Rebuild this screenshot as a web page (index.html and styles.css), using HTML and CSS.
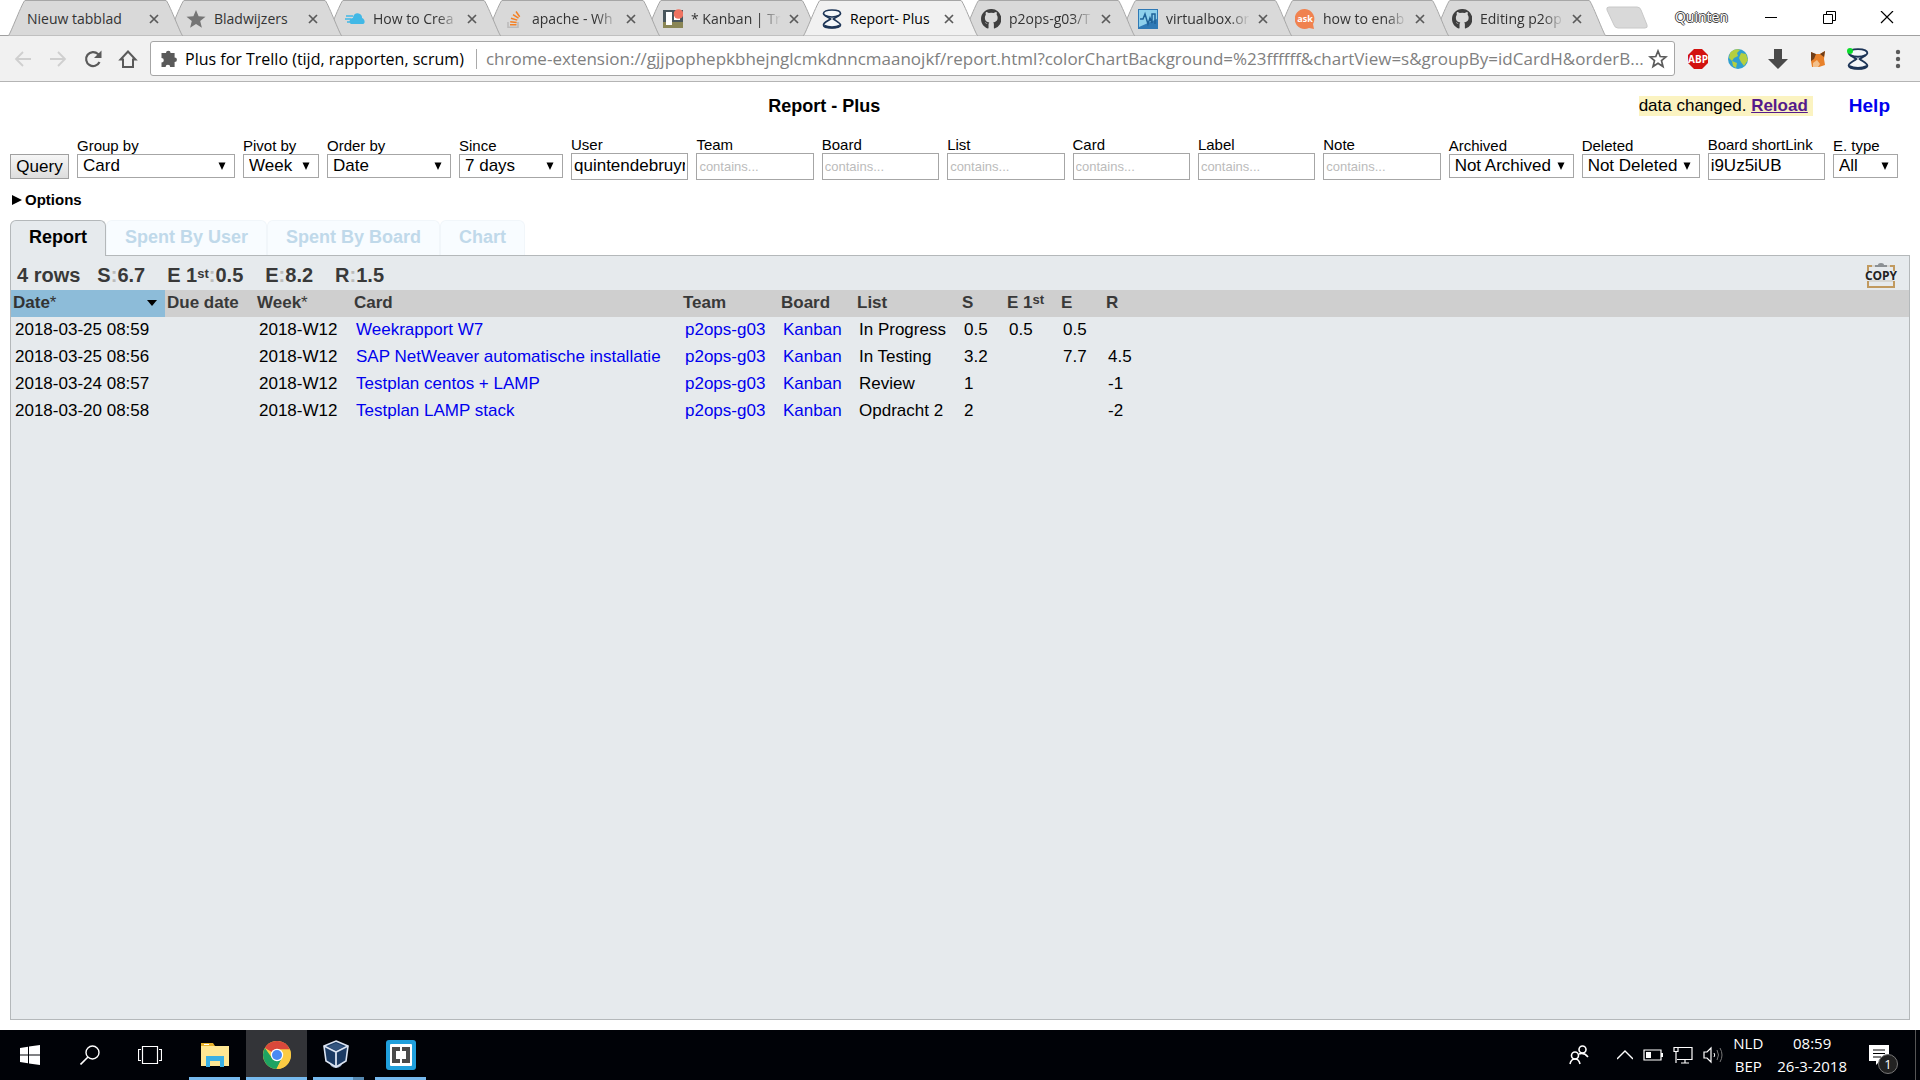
FILE: index.html
```html
<!DOCTYPE html>
<html lang="nl">
<head>
<meta charset="utf-8">
<title>Report- Plus</title>
<link rel="stylesheet" href="styles.css">
</head>
<body>
<svg class="defs" aria-hidden="true">
  <symbol id="shape" viewBox="0 0 175 36" preserveAspectRatio="none"><path d="M0 36 0.500 35.500C2 35 15 .5 17 .5H158C160 .5 173 35 174.500 35.500L175 36Z"/></symbol>
  <symbol id="close" viewBox="0 0 10 10"><path d="M1 1 9 9M9 1 1 9" stroke="#5a5a5a" stroke-width="1.700" fill="none"/></symbol>
  <symbol id="github" viewBox="0 0 16 16"><path fill="#3f3f3f" d="M8 0C3.580 0 0 3.580 0 8c0 3.540 2.290 6.530 5.470 7.590.4.070.55-.17.55-.38v-3.200C4 12.300 3.500 11 3.200 10.600c1.300.2 1.500 1.600 2.900 1.300.1-.6.3-1 .6-1.200C4.500 10.300 3.100 9.500 3.100 6.700c0-.9.3-1.600.8-2.200-.1-.2-.4-1 .1-2.100 0 0 .7-.2 2.200.8a7.700 7.700 0 0 1 4 0c1.500-1 2.200-.8 2.200-.8.4 1.100.2 1.900.1 2.100.5.6.8 1.300.8 2.200 0 2.800-1.500 3.600-3.600 3.900.3.300.6.8.6 1.600v3c0 .2.100.5.5.4A8 8 0 0 0 8 0z"/></symbol>
  <symbol id="plus" viewBox="0 0 20 20"><g fill="#f4f7fa" stroke="#1d3557" stroke-width="1.700"><path d="M10 1C5 1 1.500 2.500 1.500 4.500S6 8 8.500 10C6 12 1.500 13.500 1.500 16S5 19 10 19s8.500-1 8.500-3S14 12 11.500 10C14 8 18.500 6.500 18.500 4.500S15 1 10 1Z"/><path d="M3 6.500Q10 9.500 17 6.500" fill="none"/></g><path fill="#1d3557" d="M2 15.500Q10 19 18 15.500 18 19.500 10 19.500T2 15.500z"/></symbol>
</svg>

<header class="browser">
  <div class="tabstrip">
    <nav class="tabs" aria-label="Tabbladen">
      <div class="tab"><svg class="shape"><use href="#shape"/></svg><span class="name">Nieuw tabblad</span><button class="close" aria-label="Sluiten"><svg><use href="#close"/></svg></button></div>
      <div class="tab"><svg class="shape"><use href="#shape"/></svg><svg class="fav" viewBox="0 0 20 20"><path fill="#757575" d="m10 1 2.600 6.200 6.900.5-5.300 4.400 1.700 6.600L10 15.100 4.100 18.700l1.700-6.600L.5 7.700l6.900-.5z"/></svg><span class="name">Bladwijzers</span><button class="close" aria-label="Sluiten"><svg><use href="#close"/></svg></button></div>
      <div class="tab"><svg class="shape"><use href="#shape"/></svg><svg class="fav" viewBox="0 0 20 20"><path fill="#41b8e6" d="M6 15C3 13 5 9 8 9c0-4 4-6 7-4 2 1 2 3 2 4 3 1 4 6 0 6z"/><path d="M1 7h7M0 10h6M2 13h4" stroke="#41b8e6" stroke-width="1.400"/></svg><span class="name">How to Crea</span><button class="close" aria-label="Sluiten"><svg><use href="#close"/></svg></button></div>
      <div class="tab"><svg class="shape"><use href="#shape"/></svg><svg class="fav" viewBox="0 0 20 20"><path d="M4 13v5.200h10V13" fill="none" stroke="#bcbbbb" stroke-width="1.600"/><path d="M6 15.700h6.500M6.200 12.700l6.500.8M7 9.200l6.300 1.900M9 5.700l5.500 3.500M12 2.500l3.700 5.200" stroke="#f48024" stroke-width="1.500"/></svg><span class="name">apache - Wh</span><button class="close" aria-label="Sluiten"><svg><use href="#close"/></svg></button></div>
      <div class="tab"><svg class="shape"><use href="#shape"/></svg><svg class="fav" viewBox="0 0 20 20"><path fill="#49565c" d="M0 1h20v18H0z"/><path fill="#8a8655" d="M0 13h20v6H0z"/><path fill="#fff" d="M3 3h6v13H3zM11 4h6v7h-6z"/><circle cx="15.500" cy="5" r="4.800" fill="#f07361"/></svg><span class="name">* Kanban | Tr</span><button class="close" aria-label="Sluiten"><svg><use href="#close"/></svg></button></div>
      <div class="tab active"><svg class="shape"><use href="#shape"/></svg><svg class="fav"><use href="#plus"/></svg><span class="name">Report- Plus</span><button class="close" aria-label="Sluiten"><svg><use href="#close"/></svg></button></div>
      <div class="tab"><svg class="shape"><use href="#shape"/></svg><svg class="fav"><use href="#github"/></svg><span class="name">p2ops-g03/T</span><button class="close" aria-label="Sluiten"><svg><use href="#close"/></svg></button></div>
      <div class="tab"><svg class="shape"><use href="#shape"/></svg><svg class="fav" viewBox="0 0 20 20"><path fill="#2f79b5" d="M0 0h20v20H0z"/><path fill="#8ed0ec" d="M1 1h18v9L1 18z"/><path d="M2 10h3l2-5 3 10 2-6 2 5V5h3v10" fill="none" stroke="#1f6298" stroke-width="1.500"/></svg><span class="name">virtualbox.or</span><button class="close" aria-label="Sluiten"><svg><use href="#close"/></svg></button></div>
      <div class="tab"><svg class="shape"><use href="#shape"/></svg><svg class="fav" viewBox="0 0 20 20"><path fill="#f0824f" d="M10 0a10 10 0 1 0 4 19l5 1-1-5A10 10 0 0 0 10 0z"/><text x="10" y="13" class="ask">ask</text></svg><span class="name">how to enab</span><button class="close" aria-label="Sluiten"><svg><use href="#close"/></svg></button></div>
      <div class="tab"><svg class="shape"><use href="#shape"/></svg><svg class="fav"><use href="#github"/></svg><span class="name">Editing p2op</span><button class="close" aria-label="Sluiten"><svg><use href="#close"/></svg></button></div>
    </nav>
    <button class="newtab" aria-label="Nieuw tabblad"><svg viewBox="0 0 44 23"><path d="M3 1h28q3 0 4 3l6 15q1 3-2 3H12q-3 0-4-3L1 4Q0 1 3 1z" fill="#d9d9d9" stroke="#c8c8c8" transform="translate(0 6)"/></svg></button>
    <div class="window">
      <span class="user">Quinten</span>
      <button aria-label="Minimaliseren"><svg viewBox="0 0 14 14"><path d="M1 6.500h12" stroke="#000" fill="none"/></svg></button>
      <button aria-label="Verkleinen"><svg viewBox="0 0 14 14"><path d="M1.500 3.500h9v9h-9zM4.500 3V.5h9v9H11" stroke="#000" fill="none"/></svg></button>
      <button aria-label="Sluiten"><svg viewBox="0 0 14 14"><path d="m1 0 12 12M13 0 1 12" stroke="#000" stroke-width="1.200" fill="none"/></svg></button>
    </div>
  </div>
  <div class="toolbar">
    <button class="tool" aria-label="Vorige"><svg viewBox="0 0 20 20"><path d="M18 10H3M10 3l-7 7 7 7" stroke="#cfcfcf" stroke-width="1.800" fill="none"/></svg></button>
    <button class="tool" aria-label="Volgende"><svg viewBox="0 0 20 20"><path d="M2 10h15M10 3l7 7-7 7" stroke="#cfcfcf" stroke-width="1.800" fill="none"/></svg></button>
    <button class="tool" aria-label="Vernieuwen"><svg viewBox="0 0 20 20"><path d="M16.500 13A7 7 0 1 1 15 5l2 2" stroke="#5a5a5a" stroke-width="2.200" fill="none"/><path d="M18.500 1.500V9H11z" fill="#5a5a5a"/></svg></button>
    <button class="tool" aria-label="Startpagina"><svg viewBox="0 0 20 20"><path d="M10 2.500 2.500 10.500H5V18h10v-7.500h2.500z" stroke="#5a5a5a" stroke-width="2" fill="none"/></svg></button>
    <div class="omnibox">
      <svg class="glyph" viewBox="0 0 20 20"><path fill="#5a5a5a" d="M7 4a2.300 2.300 0 1 1 4.600 0h4v4.400a2.300 2.300 0 1 1 0 4.700V18h-4.400a2.300 2.300 0 0 0-4.600 0H2.500v-4.500a2.300 2.300 0 0 0 0-4.600V4z"/></svg>
      <span class="ext">Plus for Trello (tijd, rapporten, scrum)</span>
      <span class="url">chrome-extension://gjjpophepkbhejnglcmkdnncmaanojkf/report.html?colorChartBackground=%23ffffff&amp;chartView=s&amp;groupBy=idCardH&amp;orderB...</span>
      <button class="star" aria-label="Bladwijzer"><svg viewBox="0 0 20 20"><path d="m10 2 2.200 5.500 5.800.4-4.500 3.700 1.500 5.900-5-3.200-5 3.200 1.500-5.900L2 7.900l5.800-.4z" stroke="#5a5a5a" stroke-width="1.700" fill="none"/></svg></button>
    </div>
    <div class="extensions">
      <button aria-label="ABP"><svg viewBox="0 0 22 22"><path fill="#d2120f" d="M7 1h8l6 6v8l-6 6H7l-6-6V7z"/><text x="11" y="15" class="abp">ABP</text></svg></button>
      <button aria-label="Wereldbol"><svg viewBox="0 0 22 22"><circle cx="11" cy="11" r="10" fill="#2f9fd0"/><path fill="#b5cf3f" d="M3 5C7 0 12 1 13 2l-3 3 1 3-4 2-2 3-3-3zM14 5l5 1 2 6-4 6-3-4-2-4zM5 13l5 2-1 5-3-2z"/></svg></button>
      <button aria-label="Downloads"><svg viewBox="0 0 22 22"><path fill="#4a4a4a" d="M7 1h8v10h6L11 21 1 11h6z"/></svg></button>
      <button aria-label="Vos"><svg viewBox="0 0 22 22"><path fill="#e8812b" d="m4 4 4 2h5l5-3-1 8 1 6-6 2H5l-1-6z"/><path fill="#6f3d18" d="m4 4 5 2-2 5-3 2zM13 6l5-3-1 6z"/><path fill="#f3c08b" d="m6 15 4-3 3 4-2 3H6z"/></svg></button>
      <button aria-label="Plus"><svg viewBox="0 0 22 22"><use href="#plus"/><circle cx="3" cy="3" r="3" fill="#0bdc2b"/></svg></button>
      <button aria-label="Menu"><svg viewBox="0 0 22 22"><g fill="#5a5a5a"><circle cx="11" cy="4" r="2.200"/><circle cx="11" cy="11" r="2.200"/><circle cx="11" cy="18" r="2.200"/></g></svg></button>
    </div>
  </div>
</header>

<main class="page">
  <div class="heading">
    <h1>Report - Plus</h1>
    <p class="notice">data changed. <a href="#reload">Reload</a></p>
    <a class="help" href="#help">Help</a>
  </div>

  <form class="filters">
    <button class="query" type="button">Query</button>
    <div class="field pick w-group"><label for="group">Group by</label><select id="group"><option>Card</option></select></div>
    <div class="field pick w-pivot"><label for="pivot">Pivot by</label><select id="pivot"><option>Week</option></select></div>
    <div class="field pick w-order"><label for="order">Order by</label><select id="order"><option>Date</option></select></div>
    <div class="field pick w-since"><label for="since">Since</label><select id="since"><option>7 days</option></select></div>
    <div class="field"><label for="user">User</label><input id="user" type="text" value="quintendebruyn"></div>
    <div class="field"><label for="team">Team</label><input id="team" type="text" placeholder="contains..."></div>
    <div class="field"><label for="board">Board</label><input id="board" type="text" placeholder="contains..."></div>
    <div class="field"><label for="list">List</label><input id="list" type="text" placeholder="contains..."></div>
    <div class="field"><label for="card">Card</label><input id="card" type="text" placeholder="contains..."></div>
    <div class="field"><label for="label">Label</label><input id="label" type="text" placeholder="contains..."></div>
    <div class="field"><label for="note">Note</label><input id="note" type="text" placeholder="contains..."></div>
    <div class="field pick w-archived"><label for="archived">Archived</label><select id="archived"><option>Not Archived</option></select></div>
    <div class="field pick w-deleted"><label for="deleted">Deleted</label><select id="deleted"><option>Not Deleted</option></select></div>
    <div class="field"><label for="shortlink">Board shortLink</label><input id="shortlink" type="text" value="i9Uz5iUB"></div>
    <div class="field pick w-type"><label for="etype">E. type</label><select id="etype"><option>All</option></select></div>
  </form>

  <button class="options"><svg viewBox="0 0 10 10"><path d="M0 0 10 5 0 10z"/></svg>Options</button>

  <nav class="views">
    <a class="view current" href="#report">Report</a>
    <a class="view" href="#by-user">Spent By User</a>
    <a class="view" href="#by-board">Spent By Board</a>
    <a class="view" href="#chart">Chart</a>
  </nav>

  <section class="panel">
    <div class="summary">
      <span class="count">4 rows</span>
      <span>S<i>:</i>6.7</span>
      <span>E 1<sup>st</sup><i>:</i>0.5</span>
      <span>E<i>:</i>8.2</span>
      <span>R<i>:</i>1.5</span>
      <button class="copy" aria-label="Copy"><svg viewBox="0 0 30 26"><path d="M2 9V4h4M24 4h4v5M2 19v6h26v-6" fill="none" stroke="#c19a5f" stroke-width="2"/><path d="M6 4h18M3 19h24" stroke="#c9c4ba"/><path d="M9 5V3h3q0-2 3-2t3 2h3v2z" fill="#8b9094"/><text x="15" y="18" class="copytext">COPY</text></svg></button>
    </div>
    <table>
      <colgroup><col class="c-date"><col class="c-due"><col class="c-week"><col class="c-card"><col class="c-team"><col class="c-board"><col class="c-list"><col class="c-num"><col class="c-first"><col class="c-num"><col></colgroup>
      <thead>
        <tr><th class="sorted"><div><span>Date<i>*</i></span><svg viewBox="0 0 10 6"><path d="M0 0h10L5 6z"/></svg></div></th><th>Due date</th><th>Week<i>*</i></th><th>Card</th><th>Team</th><th>Board</th><th>List</th><th>S</th><th>E 1<sup>st</sup></th><th>E</th><th>R</th></tr>
      </thead>
      <tbody>
        <tr><td>2018-03-25 08:59</td><td></td><td>2018-W12</td><td><a href="#c1">Weekrapport W7</a></td><td><a href="#t">p2ops-g03</a></td><td><a href="#b">Kanban</a></td><td>In Progress</td><td>0.5</td><td>0.5</td><td>0.5</td><td></td></tr>
        <tr><td>2018-03-25 08:56</td><td></td><td>2018-W12</td><td><a href="#c2">SAP NetWeaver automatische installatie</a></td><td><a href="#t">p2ops-g03</a></td><td><a href="#b">Kanban</a></td><td>In Testing</td><td>3.2</td><td></td><td>7.7</td><td>4.5</td></tr>
        <tr><td>2018-03-24 08:57</td><td></td><td>2018-W12</td><td><a href="#c3">Testplan centos + LAMP</a></td><td><a href="#t">p2ops-g03</a></td><td><a href="#b">Kanban</a></td><td>Review</td><td>1</td><td></td><td></td><td>-1</td></tr>
        <tr><td>2018-03-20 08:58</td><td></td><td>2018-W12</td><td><a href="#c4">Testplan LAMP stack</a></td><td><a href="#t">p2ops-g03</a></td><td><a href="#b">Kanban</a></td><td>Opdracht 2</td><td>2</td><td></td><td></td><td>-2</td></tr>
      </tbody>
    </table>
  </section>
</main>

<footer class="taskbar">
  <button class="task" aria-label="Start"><svg class="i20" viewBox="0 0 20 20"><path fill="#fff" d="M0 3l8-1.200v7.700H0zM9 1.600 20 0v9.500H9zM0 10.500h8v7.700L0 17zM9 10.500h11V20L9 18.400z"/></svg></button>
  <button class="task" aria-label="Zoeken"><svg class="i20" viewBox="0 0 20 20"><circle cx="12.500" cy="7.500" r="6.500" fill="none" stroke="#fff" stroke-width="1.400"/><path d="M8 12 .5 19.500" stroke="#fff" stroke-width="1.600"/></svg></button>
  <button class="task" aria-label="Taakweergave"><svg class="i24" viewBox="0 0 24 20"><path d="M4.500 1.500h15v17h-15zM3 4.500H.5v11H3M21 4.500h2.500v11H21" fill="none" stroke="#fff" stroke-width="1.200"/></svg></button>
  <button class="task run" aria-label="Verkenner"><svg class="i30" viewBox="0 0 30 30"><path fill="#e8b32c" d="M1 3h12l2 3v4H1z"/><path fill="#ffe793" d="M1 6h28v20H1z"/><path fill="#3bb0e4" d="M6 27V16h18v11h-4v-6h-10v6z"/><path fill="#fff" d="M4 4h5v1H4z"/></svg></button>
  <button class="task run front" aria-label="Chrome"><svg class="i30" viewBox="0 0 30 30"><circle cx="15" cy="15" r="14" fill="#fccb43"/><path fill="#d9483b" d="M15 15 2.900 8A14 14 0 0 1 27.800 9.500H15z"/><path fill="#1ea362" d="M2.900 8A14 14 0 0 0 14.500 29L20 18l-5-3-5 3z"/><path fill="#fccb43" d="M15 9.500h12.800A14 14 0 0 1 14.500 29L20 18z"/><circle cx="15" cy="15" r="6.200" fill="#fff"/><circle cx="15" cy="15" r="5" fill="#4a8af4"/></svg></button>
  <button class="task run many" aria-label="VirtualBox"><svg class="i30" viewBox="0 0 30 30"><path fill="#98a8c4" d="M8 22h14l-2 4q-5 4-10 0z"/><path fill="#1b3a63" stroke="#dbe4f2" stroke-width="1.600" d="M15 1 27 6l-2 15-10 6-10-6L3 6z"/><path fill="#34557f" d="m15 3 8 3.500-8 4-8-4z"/><path d="m3 6 12 6 12-6M15 12v15" fill="none" stroke="#dbe4f2" stroke-width="1.800"/></svg></button>
  <button class="task run" aria-label="Brackets"><svg class="i30" viewBox="0 0 30 30"><rect width="30" height="30" rx="3" fill="#1f9fdc"/><rect x="4" y="4" width="22" height="22" rx="1" fill="#fff"/><path fill="#4a4a4a" d="M6 7h8v4h-4v8h4v4H6zM24 7h-8v4h4v8h-4v4h8z"/></svg></button>
  <div class="tray">
    <svg class="i20 people" viewBox="0 0 20 20"><g fill="none" stroke="#fff" stroke-width="1.600"><circle cx="13.500" cy="4.500" r="3.500"/><circle cx="6" cy="10.500" r="3.500"/><path d="M1 19q1-5 5-5t5 5M10 9q5-2 9 3"/></g></svg>
    <svg class="i16" viewBox="0 0 16 16"><path d="m0 12 8-8 8 8" fill="none" stroke="#fff" stroke-width="1.400"/></svg>
    <svg class="i20" viewBox="0 0 20 20"><path d="M1 5h17v10H1z" fill="none" stroke="#fff" stroke-width="1.200"/><path fill="#fff" d="M3 7h5v6H3zM18 8h2v4h-2z"/></svg>
    <svg class="i20" viewBox="0 0 20 20"><path d="M5 2.500h14v12H4M12 15v3M8 18h8M3 7v11M1 2.500h4v4H1z" fill="none" stroke="#fff" stroke-width="1.200"/></svg>
    <svg class="i20" viewBox="0 0 20 20"><path d="M1 7h3l4-4v14l-4-4H1z" fill="none" stroke="#fff" stroke-width="1.200"/><path d="M11 8q1.500 2 0 4" fill="none" stroke="#fff"/><path d="M14 5q3 5 0 10M17 3q4 7 0 14" fill="none" stroke="#777"/></svg>
    <div class="lines"><span>NLD</span><span>BEP</span></div>
    <div class="lines clock"><span>08:59</span><span>26-3-2018</span></div>
    <div class="center"><svg class="i20" viewBox="0 0 20 20"><path fill="#fff" d="M0 0h20v16h-9l-4 4v-4H0z"/><path d="M4 5h12M4 8.500h12M4 12h8" stroke="#000"/></svg><span class="badge">1</span></div>
  </div>
</footer>
</body>
</html>
```
FILE: styles.css
```css
* { box-sizing: border-box; }
body { margin: 0; min-height: 100vh; display: flex; flex-direction: column; background: #fff; color: #000; font: 17px/20px "Liberation Sans", Arial, sans-serif; }
button { padding: 0; border: 0; background: none; font: inherit; color: inherit; }
svg { display: block; }
a { color: #00e; text-decoration: none; }
.defs { display: none; }

/* browser frame */
.browser { font-family: "Open Sans", "Noto Sans", sans-serif; background: #f1f1f1; border-bottom: 1px solid #b4b4b4; }
.tabstrip { display: flex; height: 36px; padding-left: 8px; background: #fff; box-shadow: inset 0 -1px #a0a0a0; }
.tabs { display: flex; padding-right: 16px; }
.tab { position: relative; display: flex; align-items: center; width: 175px; margin-right: -16px; padding: 2px 24px 0 19px; font-size: 14px; color: #333; }
.tab:nth-child(1) { z-index: 10; }
.tab:nth-child(2) { z-index: 9; }
.tab:nth-child(3) { z-index: 8; }
.tab:nth-child(4) { z-index: 7; }
.tab:nth-child(5) { z-index: 6; }
.tab:nth-child(7) { z-index: 5; }
.tab:nth-child(8) { z-index: 4; }
.tab:nth-child(9) { z-index: 3; }
.tab:nth-child(10) { z-index: 2; }
.tab.active { z-index: 11; color: #000; }
.tab.active ~ .tab { width: 173px; }
.shape { position: absolute; inset: 0; width: 100%; height: 100%; fill: #d9d9d9; stroke: #a6a6a6; }
.active .shape { fill: #f1f1f1; }
.fav { position: relative; flex: none; width: 20px; height: 20px; margin-right: 8px; }
.name { position: relative; flex: 1; white-space: nowrap; mask-image: linear-gradient(90deg, #000 75%, transparent); }
.tab:nth-child(1) .name, .tab:nth-child(2) .name, .tab.active .name { mask-image: none; }
.close { position: relative; flex: none; margin-left: 8px; }
.tab .close svg { width: 10px; height: 10px; }
.ask { font: bold 9px "Open Sans", sans-serif; fill: #fff; text-anchor: middle; }
.newtab svg { width: 44px; height: 23px; overflow: visible; }
.newtab { align-self: flex-start; }
.window { display: flex; flex: 1; justify-content: flex-end; align-items: center; padding-right: 4px; }
.window .user { margin-right: 14px; padding-bottom: 3px; font-size: 14px; color: #fff; text-shadow: 1px 0 #444, -1px 0 #444, 0 1px #444, 0 -1px #444; }
.window button { width: 58px; display: flex; justify-content: center; }
.window svg { width: 14px; height: 14px; }
.toolbar { display: flex; align-items: center; height: 45px; padding: 0 11px 0 5px; }
.tool { width: 35px; display: flex; justify-content: center; }
.tool svg { width: 20px; height: 20px; }
.omnibox { display: flex; flex: 1; align-items: center; min-width: 0; height: 35px; margin-left: 5px; padding: 0 6px 0 8px; border: 1px solid #a6a6a6; border-radius: 3px; background: #fff; font-size: 16px; }
.glyph { flex: none; width: 20px; height: 20px; margin-right: 6px; }
.ext { white-space: nowrap; padding-right: 12px; border-right: 1px solid #aaa; }
.url { flex: 1; min-width: 0; overflow: hidden; white-space: nowrap; padding-left: 9px; font-size: 17px; line-height: 24px; color: #808080; }
.star svg { width: 20px; height: 20px; }
.extensions { display: flex; gap: 18px; margin-left: 12px; }
.extensions svg { width: 22px; height: 22px; }
.abp { font: bold 10px "Open Sans", sans-serif; fill: #fff; text-anchor: middle; }

/* report page */
.page { flex: 1; display: flex; flex-direction: column; padding: 13px 10px 10px; }
.heading { display: flex; align-items: center; padding-right: 20px; }
h1 { flex: 1; margin: 0; text-align: center; font-size: 18px; }
.notice { margin: 0; padding-right: 5px; background: #fbf3c1; }
.notice a { font-weight: bold; color: #551a8b; text-decoration: underline; }
.help { margin-left: 36px; font-size: 19px; line-height: 22px; font-weight: bold; }
.filters { display: flex; gap: 8px; align-items: flex-end; margin-top: 19px; padding-right: 12px; }
.query { width: 59px; height: 25px; margin-bottom: 1px; border: 1px solid #a0a0a0; background: linear-gradient(#f6f6f6, #ddd); }
.field { display: flex; flex-direction: column; flex: 1 1 0; min-width: 0; }
.field label { font-size: 15px; line-height: 17px; white-space: nowrap; }
.field input, .field select { width: 100%; border: 1px solid #a6a6a6; background: #fff; font: inherit; color: #000; }
.field input { height: 27px; padding: 0 2px 2px; border-radius: 0; }
.field input::placeholder { font-size: 13px; color: #bbb; }
.pick { flex: none; padding-bottom: 2px; }
.field select { height: 24px; padding: 0 0 0 5px; border-radius: 0; appearance: none; background: #fff url("data:image/svg+xml,%3Csvg xmlns='http://www.w3.org/2000/svg' width='8' height='8'%3E%3Cpath d='M.5 .5h7L4 8z'/%3E%3C/svg%3E") no-repeat right 8px center; }
.w-group { width: 158px; }
.w-pivot { width: 76px; }
.w-order { width: 124px; }
.w-since { width: 104px; }
.w-archived { width: 125px; }
.w-deleted { width: 118px; }
.w-type { width: 65px; }
.options { display: flex; align-items: center; gap: 3px; align-self: flex-start; margin: 10px 0 10px 2px; font-size: 15px; font-weight: bold; }
.options svg { width: 10px; height: 10px; }
.views { display: flex; }
.view { height: 35px; padding: 6px 18px; border: 1px solid #f1f6fa; border-bottom: 0; border-radius: 6px 6px 0 0; background: #f8fcff; color: #c0d9ea; font-size: 18px; font-weight: bold; }
.view.current { height: 36px; margin-bottom: -1px; border-color: #b4b8ba; background: #e6eaed; color: #000; position: relative; }
.panel { flex: 1; border: 1px solid #b4b8ba; background: #e6eaed; }
.summary { display: flex; align-items: center; height: 34px; gap: 22px; padding: 4px 13px 0 6px; font-size: 20px; font-weight: bold; color: #393939; }
.summary .count { margin-right: -5px; }
.summary i { font-style: normal; color: #bbb; }
sup { font-size: 13px; line-height: 0; vertical-align: 4px; }
.copy { margin-left: auto; }
.copy svg { width: 30px; height: 26px; overflow: visible; }
.copytext { font: bold 12px "Open Sans", sans-serif; fill: #222; text-anchor: middle; }
table { width: 100%; table-layout: fixed; border-collapse: collapse; white-space: nowrap; }
.c-date { width: 154px; }
.c-due { width: 90px; }
.c-week { width: 97px; }
.c-card { width: 329px; }
.c-team { width: 98px; }
.c-board { width: 76px; }
.c-list { width: 105px; }
.c-num { width: 45px; }
.c-first { width: 54px; }
th { height: 27px; padding: 0 0 1px 2px; text-align: left; background: #cfcfcf; color: #393939; }
th i { font-style: normal; font-weight: normal; }
th.sorted { background: #8dbcd9; color: #333; }
.sorted div { display: flex; align-items: center; justify-content: space-between; padding-right: 8px; }
.sorted svg { width: 10px; height: 6px; }
td { height: 27px; padding: 0 0 1px 4px; }

/* Windows taskbar */
.taskbar { display: flex; height: 50px; background: #000207; color: #fff; font-family: "Open Sans", "Noto Sans", sans-serif; }
.task { display: flex; align-items: center; justify-content: center; width: 60px; }
.run { width: 51px; margin: 0 4px 0 9px; background: linear-gradient(#76b9ed, #76b9ed) no-repeat bottom / 100% 3px; }
.front { width: 61px; margin: 0 2px; background-color: #333438; }
.many { margin-left: 4px; margin-right: 2px; padding-right: 5px; background-image: linear-gradient(90deg, #76b9ed 40px, #5689b1 40px); }
.i16 { width: 16px; height: 16px; }
.i20 { width: 20px; height: 20px; }
.i24 { width: 24px; height: 20px; }
.i30 { width: 30px; height: 30px; }
.tray { display: flex; align-items: center; margin-left: auto; margin-right: 4px; padding-right: 26px; border-right: 1px solid #555; gap: 10px; }
.people { margin-right: 18px; }
.lines { display: flex; flex-direction: column; align-items: center; font-size: 15px; line-height: 23px; }
.clock { margin: 0 12px 0 4px; }
.center { position: relative; }
.badge { position: absolute; left: 9px; top: 9px; width: 20px; height: 20px; border: 1px solid #777; border-radius: 50%; background: #222; text-align: center; font-size: 13px; line-height: 18px; }
```
